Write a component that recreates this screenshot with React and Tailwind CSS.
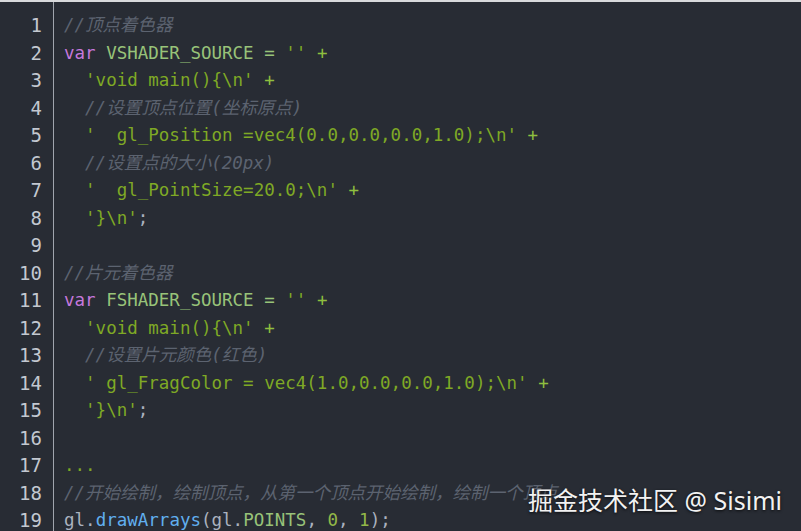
import React from "react";

const C = {
  kw: "text-[#c678dd]",
  id: "text-[#98c379]",
  str: "text-[#7fa925]",
  op: "text-[#8fbf3f]",
  cm: "text-[#5c6370] italic",
  pl: "text-[#abb2bf]",
  fn: "text-[#61afef]",
  num: "text-[#93b848]",
};

// each line is a list of [text, colorKey]
const lines = [
  [["//顶点着色器", "cm"]],
  [["var", "kw"], [" VSHADER_SOURCE ", "id"], ["=", "id"], [" '' ", "str"], ["+", "op"]],
  [["  'void main(){\\n' ", "str"], ["+", "op"]],
  [["  //设置顶点位置(坐标原点)", "cm"]],
  [["  '  gl_Position =vec4(0.0,0.0,0.0,1.0);\\n' ", "str"], ["+", "op"]],
  [["  //设置点的大小(20px)", "cm"]],
  [["  '  gl_PointSize=20.0;\\n' ", "str"], ["+", "op"]],
  [["  '}\\n'", "str"], [";", "pl"]],
  [],
  [["//片元着色器", "cm"]],
  [["var", "kw"], [" FSHADER_SOURCE ", "id"], ["=", "id"], [" '' ", "str"], ["+", "op"]],
  [["  'void main(){\\n' ", "str"], ["+", "op"]],
  [["  //设置片元颜色(红色)", "cm"]],
  [["  ' gl_FragColor = vec4(1.0,0.0,0.0,1.0);\\n' ", "str"], ["+", "op"]],
  [["  '}\\n'", "str"], [";", "pl"]],
  [],
  [["...", "str"]],
  [["//开始绘制，绘制顶点，从第一个顶点开始绘制，绘制一个顶点", "cm"]],
  [
    ["gl", "pl"],
    [".", "pl"],
    ["drawArrays", "fn"],
    ["(", "pl"],
    ["gl", "pl"],
    [".", "pl"],
    ["POINTS", "id"],
    [", ", "pl"],
    ["0", "num"],
    [", ", "pl"],
    ["1", "num"],
    [");", "pl"],
  ],
];

export default function App() {
  return (
    <div className="relative w-[801px] h-[531px] overflow-hidden bg-[#282c34] border-t-2 border-[#d9dadc]">
      <div className="flex h-full">
        <div
          className="w-[53px] pr-[11px] pt-[10px] text-right text-[#c3c8d0] text-[19px] leading-[27.5px]"
          style={{ fontFamily: '"DejaVu Sans Mono", monospace' }}
        >
          {lines.map((_, i) => (
            <div key={i} className="h-[27.5px]">{i + 1}</div>
          ))}
        </div>
        <div className="w-px h-full bg-[#a0a5ad]" />
        <div
          className="flex-1 pl-[10px] pt-[10px] text-[17.5px] leading-[27.5px] whitespace-pre"
          style={{ fontFamily: '"DejaVu Sans Mono", "Noto Sans CJK SC", monospace' }}
        >
          {lines.map((toks, i) => (
            <div key={i} className="h-[27.5px]">
              {toks.map(([t, k], j) => (
                <span key={j} className={C[k]}>
                  {t}
                </span>
              ))}
            </div>
          ))}
        </div>
      </div>
      <div
        className="absolute right-[19px] bottom-[14px] text-[25px] leading-[34px] text-[#f2f2f2] whitespace-pre [text-shadow:0_1px_3px_rgba(0,0,0,0.8)]"
        style={{ fontFamily: '"Noto Sans", "Noto Sans CJK SC", sans-serif' }}
      >
        掘金技术社区 @ Sisimi
      </div>
    </div>
  );
}
